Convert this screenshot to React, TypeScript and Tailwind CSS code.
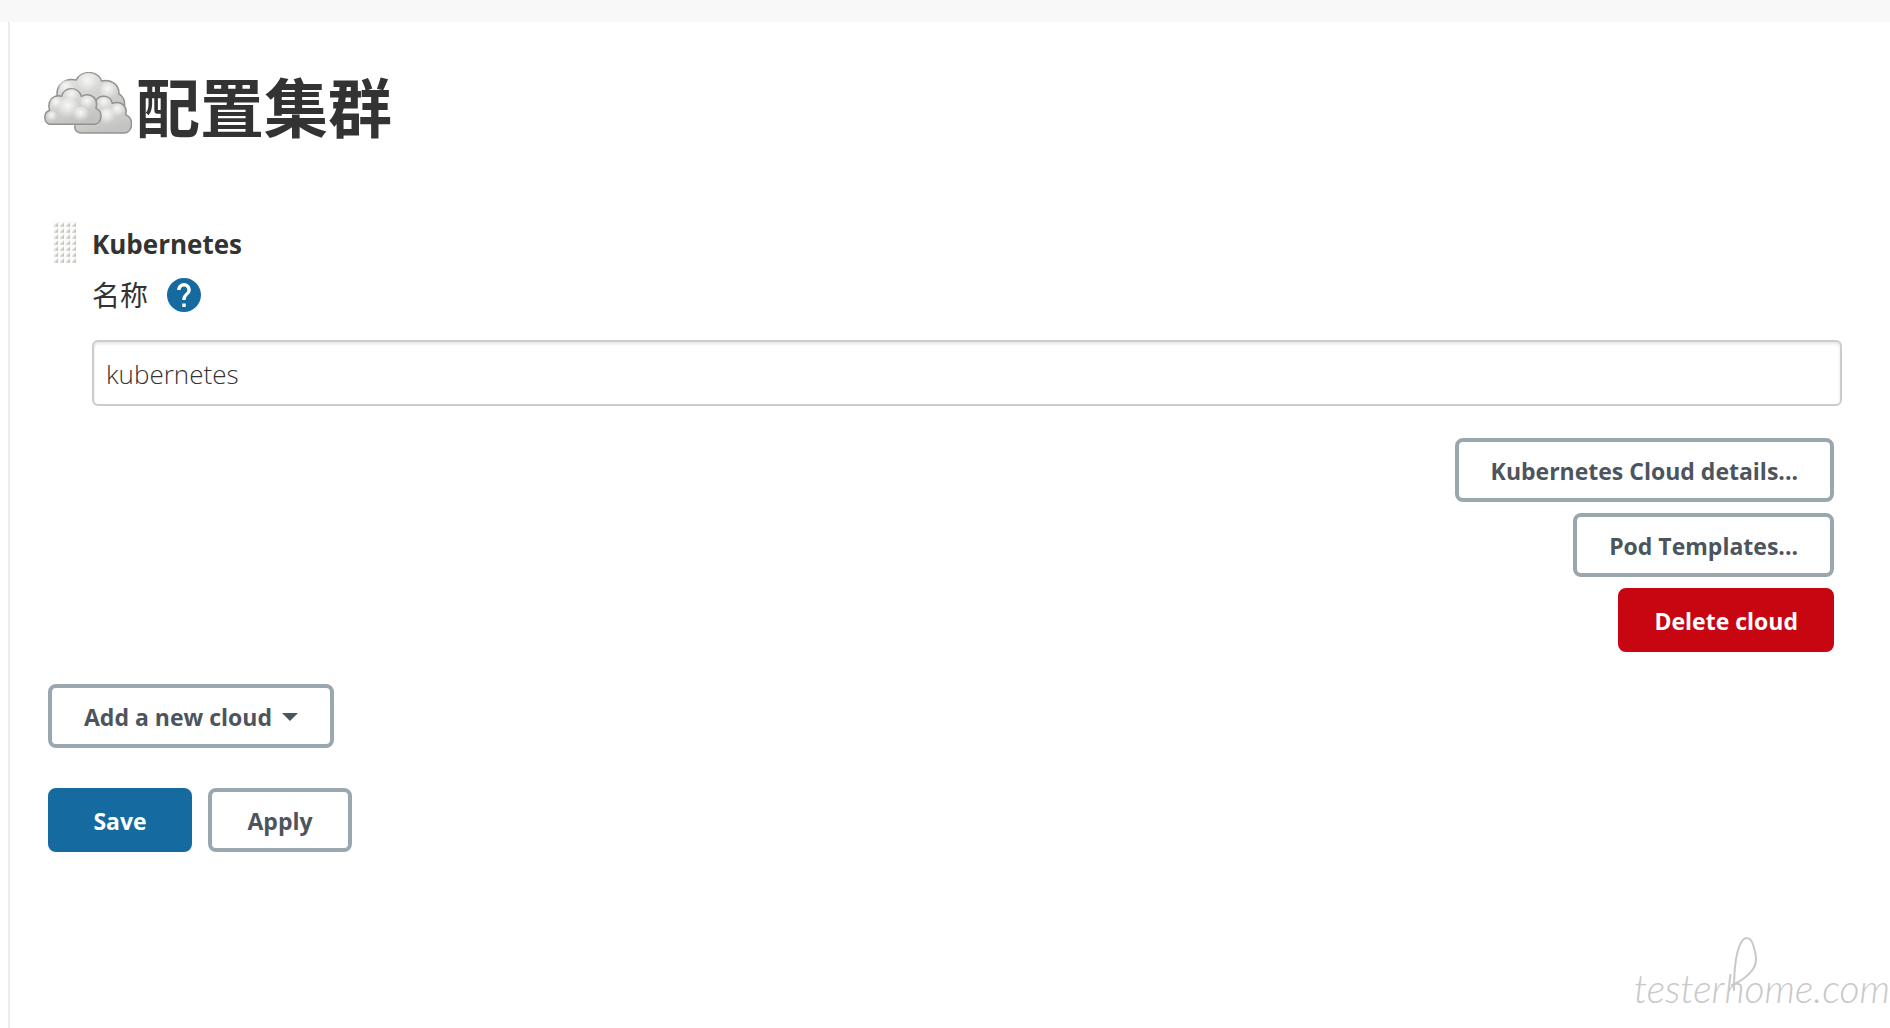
import { useState } from 'react';
import type { ButtonHTMLAttributes } from 'react';
import clsx from 'clsx';

type Variant = 'default' | 'primary' | 'danger';

interface ButtonProps extends ButtonHTMLAttributes<HTMLButtonElement> {
  variant?: Variant;
}

const variants: Record<Variant, string> = {
  default: 'border-[#9ba7af] bg-white text-[#4d545d]',
  primary: 'border-[#156a9f] bg-[#156a9f] text-white',
  danger: 'border-[#c80612] bg-[#c80612] text-white',
};

function Button({ variant = 'default', className, children, ...props }: ButtonProps) {
  return (
    <button
      type="button"
      className={clsx(
        'flex h-16 items-center justify-center rounded-lg border-4 px-8 pt-0.5 text-[23px] font-[670]',
        variants[variant],
        className
      )}
      {...props}
    >
      {children}
    </button>
  );
}

function CloudIcon() {
  return (
    <svg viewBox="24 36 264 192" className="mb-2 h-16 w-[88px]" aria-hidden="true">
      <defs>
        <radialGradient id="puff" cx="0.45" cy="0.35" r="0.6">
          <stop offset="0" stopColor="#f8f8f7" />
          <stop offset="0.5" stopColor="#ebebea" stopOpacity="0.7" />
          <stop offset="1" stopColor="#dededc" stopOpacity="0" />
        </radialGradient>
        <linearGradient id="body" x1="0" y1="0" x2="0.4" y2="1">
          <stop offset="0" stopColor="#e6e6e4" />
          <stop offset="1" stopColor="#c3c3c1" />
        </linearGradient>
      </defs>
      <g stroke="#92928d" strokeWidth="4.5" strokeLinejoin="round">
        <path
          fill="url(#body)"
          d="M64 112C58 78 84 52 121 60C132 32 184 28 197 63C228 56 250 76 249 102C262 108 268 124 265 140L180 190L70 170Z"
        />
        <g stroke="none" fill="url(#puff)">
          <circle cx="92" cy="86" r="25" />
          <circle cx="158" cy="70" r="32" />
          <circle cx="218" cy="94" r="27" />
        </g>
        <path
          fill="url(#body)"
          d="M138 219C116 219 110 198 124 186L184 116C194 104 224 106 229 130C254 121 276 138 269 164C296 176 290 219 264 219Z"
        />
        <g stroke="none" fill="url(#puff)">
          <circle cx="206" cy="130" r="19" />
          <circle cx="246" cy="152" r="21" />
          <circle cx="214" cy="170" r="26" />
        </g>
        <path
          fill="url(#body)"
          d="M46 193C22 193 20 158 41 151C32 124 52 102 77 109C82 80 128 78 136 109C162 97 188 112 180 145C203 155 198 193 174 193Z"
        />
        <g stroke="none" fill="url(#puff)">
          <circle cx="62" cy="131" r="20" />
          <circle cx="108" cy="108" r="21" />
          <circle cx="155" cy="129" r="22" />
          <circle cx="98" cy="146" r="32" />
          <circle cx="136" cy="164" r="24" />
          <circle cx="48" cy="170" r="16" />
        </g>
      </g>
    </svg>
  );
}

function DragHandle() {
  return (
    <svg width="24" height="42" className="text-[#c3c3bf]" aria-hidden="true">
      <defs>
        <pattern id="grip" width="6" height="6" patternUnits="userSpaceOnUse">
          <rect width="6" height="6" fill="#fbfbfa" />
          <path d="M5 1V6H1V4.500Z" fill="currentColor" opacity="0.45" />
          <path d="M5 2V5.500H2Z" fill="currentColor" />
        </pattern>
      </defs>
      <rect width="24" height="42" fill="url(#grip)" />
    </svg>
  );
}

function HelpIcon() {
  return (
    <svg viewBox="2 2 20 20" className="h-[34px] w-[34px]" fill="#156a9f" aria-hidden="true">
      <path d="M12 2C6.480 2 2 6.480 2 12s4.480 10 10 10 10-4.480 10-10S17.520 2 12 2zm1 17h-2v-2h2v2zm2.070-7.750l-.9.920C13.450 12.900 13 13.500 13 15h-2v-.5c0-1.100.450-2.100 1.170-2.830l1.240-1.260c.370-.360.590-.860.590-1.410 0-1.100-.9-2-2-2s-2 .9-2 2H8c0-2.210 1.790-4 4-4s4 1.790 4 4c0 .880-.360 1.680-.930 2.250z" />
    </svg>
  );
}

function Watermark() {
  return (
    <div className="pointer-events-none absolute right-0 bottom-5 font-['Lato','Open_Sans',sans-serif] text-[39px] leading-10 font-light text-[#c8c8c8] italic select-none">
      {/* long loop rising from the h */}
      <svg
        viewBox="0 0 30 56"
        className="absolute bottom-4 left-[96px] h-14 w-[30px]"
        fill="none"
        stroke="currentColor"
        strokeWidth="2"
        strokeLinecap="round"
        aria-hidden="true"
      >
        <path d="M4 54C4 32 6 14 12 5C15 1 20 1 22 6C24 11 26 18 26 24C26 34 14 44 2 49" />
      </svg>
      testerhome.com
    </div>
  );
}

export default function App() {
  const [name, setName] = useState('kubernetes');

  return (
    <div className="relative flex min-h-screen flex-col overflow-hidden bg-white font-['Open_Sans','Noto_Sans_CJK_SC',sans-serif] text-[#333]">
      <header className="h-[22px] bg-[#f8f8f8]" />
      <main className="ml-2 flex-1 border-l-2 border-[#e8eef2] pt-10 pr-12 pl-[38px]">
        <h1 className="-ml-1 flex items-center gap-1 text-[64px] leading-[92px] font-bold">
          <CloudIcon />
          配置集群
        </h1>

        <form onSubmit={(e) => e.preventDefault()}>
          <section className="mt-[67px] grid grid-cols-[44px_1fr]">
            <div className="pl-[5px]">
              <DragHandle />
            </div>
            <div>
              <h2 className="text-[26px] leading-[46px] font-bold">Kubernetes</h2>
              <div className="mt-1 flex h-12 items-center gap-[19px]">
                <label htmlFor="cloud-name" className="text-[28px] leading-10">
                  名称
                </label>
                <button type="button" aria-label="Help">
                  <HelpIcon />
                </button>
              </div>
              <input
                id="cloud-name"
                type="text"
                value={name}
                onChange={(e) => setName(e.target.value)}
                className="mt-[21px] block h-[66px] w-full rounded-md border-2 border-[#ccc] px-3 pt-0.5 text-[26px] font-light shadow-[inset_0_2px_3px_rgba(0,0,0,0.1)] outline-none"
              />
              <div className="mt-8 flex flex-col items-end gap-[11px] pr-2">
                <Button>Kubernetes Cloud details...</Button>
                <Button>Pod Templates...</Button>
                <Button variant="danger">Delete cloud</Button>
              </div>
            </div>
          </section>

          <Button className="mt-8 gap-2.5">
            Add a new cloud
            <svg width="16" height="8" fill="currentColor" aria-hidden="true">
              <path d="M0 0H16L8 8Z" />
            </svg>
          </Button>

          <div className="mt-10 flex gap-4">
            <Button type="submit" variant="primary" className="w-36">
              Save
            </Button>
            <Button className="w-36">Apply</Button>
          </div>
        </form>
      </main>
      <Watermark />
    </div>
  );
}
